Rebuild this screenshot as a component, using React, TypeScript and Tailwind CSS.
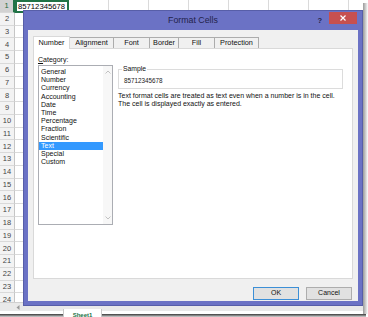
const rows = Array.from({ length: 24 }, (_, i) => i + 1);
const cols = [54, 40, 40, 40, 40, 40, 40, 40, 40];

const categories = [
  "General",
  "Number",
  "Currency",
  "Accounting",
  "Date",
  "Time",
  "Percentage",
  "Fraction",
  "Scientific",
  "Text",
  "Special",
  "Custom",
];

const tabs = [
  { label: "Alignment", w: "w-[44px]" },
  { label: "Font", w: "w-[36px]" },
  { label: "Border", w: "w-[29px]" },
  { label: "Fill", w: "w-[36px]" },
  { label: "Protection", w: "w-[44px]" },
];

function Sheet() {
  return (
    <div className="h-[302px] overflow-hidden">
      {rows.map((r) => (
        <div key={r} className="flex h-[12.75px]">
          <div
            className={`w-[15px] shrink-0 flex items-center justify-center text-[7.5px] border-b border-[#d9d9d9] ${
              r === 1
                ? "bg-[#d2d2d2] text-[#1d6b3e] border-r-2 border-r-[#217346]"
                : "bg-[#f3f3f3] text-[#444] border-r border-r-[#c6c6c6]"
            }`}
          >
            {r}
          </div>
          {cols.map((w, i) => (
            <div
              key={i}
              style={{ width: w }}
              className={`shrink-0 ${
                r === 1 && i === 0
                  ? "border-2 border-[#217346] text-[7.7px] text-black leading-[9px] pl-[1px]"
                  : "border-r border-b border-[#dadada]"
              }`}
            >
              {r === 1 && i === 0 ? "85712345678" : null}
            </div>
          ))}
        </div>
      ))}
    </div>
  );
}

function ListBox() {
  return (
    <div className="w-[75px] h-[160px] border border-[#abadb3] bg-white flex">
      <div className="flex-1 pt-[2px]">
        {categories.map((c) => (
          <div
            key={c}
            className={`h-[8.2px] leading-[8.2px] text-[7px] pl-[2px] ${
              c === "Text" ? "bg-[#3399ff] text-white" : "text-[#111]"
            }`}
          >
            {c}
          </div>
        ))}
      </div>
      <div className="w-[9px] bg-[#f7f7f7] flex flex-col justify-between items-center py-[4px]">
        <svg width="6" height="4" viewBox="0 0 6 4">
          <path d="M0.5 3.5 L3 1 L5.5 3.5" stroke="#c2c2c2" strokeWidth="1" fill="none" />
        </svg>
        <svg width="6" height="4" viewBox="0 0 6 4">
          <path d="M0.5 0.5 L3 3 L5.5 0.5" stroke="#c2c2c2" strokeWidth="1" fill="none" />
        </svg>
      </div>
    </div>
  );
}

function FormatCellsDialog() {
  return (
    <div className="absolute left-[23px] top-[10px] w-[340px] h-[296px] bg-[#6b72c5] border border-[#575ea8] flex flex-col px-[4px] pb-[4px]">
      {/* Title bar */}
      <div className="h-[19px] shrink-0 relative flex items-center justify-center">
        <span className="text-[8.8px] text-[#23234a]">Format Cells</span>
        <span className="absolute right-[36px] top-[4px] text-[7.5px] font-bold text-[#23234a]">?</span>
        <div className="absolute right-[1px] top-[1px] w-[28px] h-[12px] bg-[#c75050] flex items-center justify-center">
          <svg width="6" height="6" viewBox="0 0 6 6">
            <path d="M0.5 0.5 L5.5 5.5 M5.5 0.5 L0.5 5.5" stroke="white" strokeWidth="1.2" />
          </svg>
        </div>
      </div>

      {/* Body */}
      <div className="flex-1 bg-[#f0f0f0] flex flex-col px-[5px]">
        {/* Tabs */}
        <div className="flex items-end h-[18px] pt-[5px]">
          <div className="w-[37px] h-[13px] bg-white border border-b-0 border-[#d9d9d9] -mb-px relative z-10 flex items-center justify-center text-[7.3px] text-[#111]">
            Number
          </div>
          {tabs.map((t) => (
            <div
              key={t.label}
              className={`${t.w} h-[11px] bg-[#f0f0f0] border border-b-0 border-l-0 border-[#acacac] flex items-center justify-center text-[7.3px] text-[#111]`}
            >
              {t.label}
            </div>
          ))}
        </div>

        {/* Tab panel */}
        <div className="h-[231px] bg-white border border-[#d9d9d9] flex gap-[5px] px-[4px] pt-[6px]">
          <div className="flex flex-col">
            <div className="text-[7px] leading-[9px] text-[#111] mb-[1px]">
              <span className="underline">C</span>ategory:
            </div>
            <ListBox />
          </div>

          <div className="flex-1 flex flex-col pt-[14px] pr-[5px]">
            <div className="relative h-[20px] border border-[#dcdcdc] flex items-end pb-[3px] pl-[5px]">
              <span className="absolute left-[3px] -top-[5px] bg-white px-[1px] text-[6.8px] leading-[8px] text-[#111]">
                Sample
              </span>
              <span className="text-[6.3px] leading-[8px] text-[#222]">85712345678</span>
            </div>
            <div className="mt-[3px] text-[7px] leading-[8px] text-[#111] whitespace-nowrap">
              <div>Text format cells are treated as text even when a number is in the cell.</div>
              <div>The cell is displayed exactly as entered.</div>
            </div>
          </div>
        </div>

        {/* Buttons */}
        <div className="flex justify-end gap-[7px] pt-[8px] pr-[1px]">
          <div className="w-[46px] h-[13px] bg-[#e1e1e1] border border-[#3c8fd6] flex items-center justify-center text-[7px] text-[#111]">
            OK
          </div>
          <div className="w-[46px] h-[13px] bg-[#e1e1e1] border border-[#adadad] flex items-center justify-center text-[7px] text-[#111]">
            Cancel
          </div>
        </div>
      </div>
    </div>
  );
}

export default function App() {
  return (
    <div className="w-[368px] h-[317px] bg-white overflow-hidden font-['Liberation_Sans',Arial,sans-serif]">
      <div className="flex">
        <div className="w-[363px] h-[311px] relative overflow-hidden bg-white">
          <Sheet />
          {/* Sheet tab bar */}
          <div className="h-[9px] bg-[#e9e9e9] border-t border-[#d0d0d0] flex items-center pl-[16px]">
            <svg width="4" height="5" viewBox="0 0 4 5">
              <path d="M3.5 0 L0.5 2.5 L3.5 5 Z" fill="#9a9a9a" />
            </svg>
          </div>
          <FormatCellsDialog />
        </div>
        <div className="w-[5px] h-[311px] bg-gradient-to-r from-[#9a9a9a] to-white mt-[3px]" />
      </div>
      {/* bottom shadow with sheet tab */}
      <div className="relative h-[6px]">
        <div className="h-[3px] w-[366px] bg-gradient-to-b from-[#3a3a3a] to-[#d8d8d8]" />
        <div className="absolute left-[63px] -top-[5px] w-[39px] h-[11px] bg-white border-x border-[#c8c8c8] flex justify-center pt-[3px] text-[6px] leading-[7px] text-[#217346] font-bold">
          Sheet1
        </div>
      </div>
    </div>
  );
}
